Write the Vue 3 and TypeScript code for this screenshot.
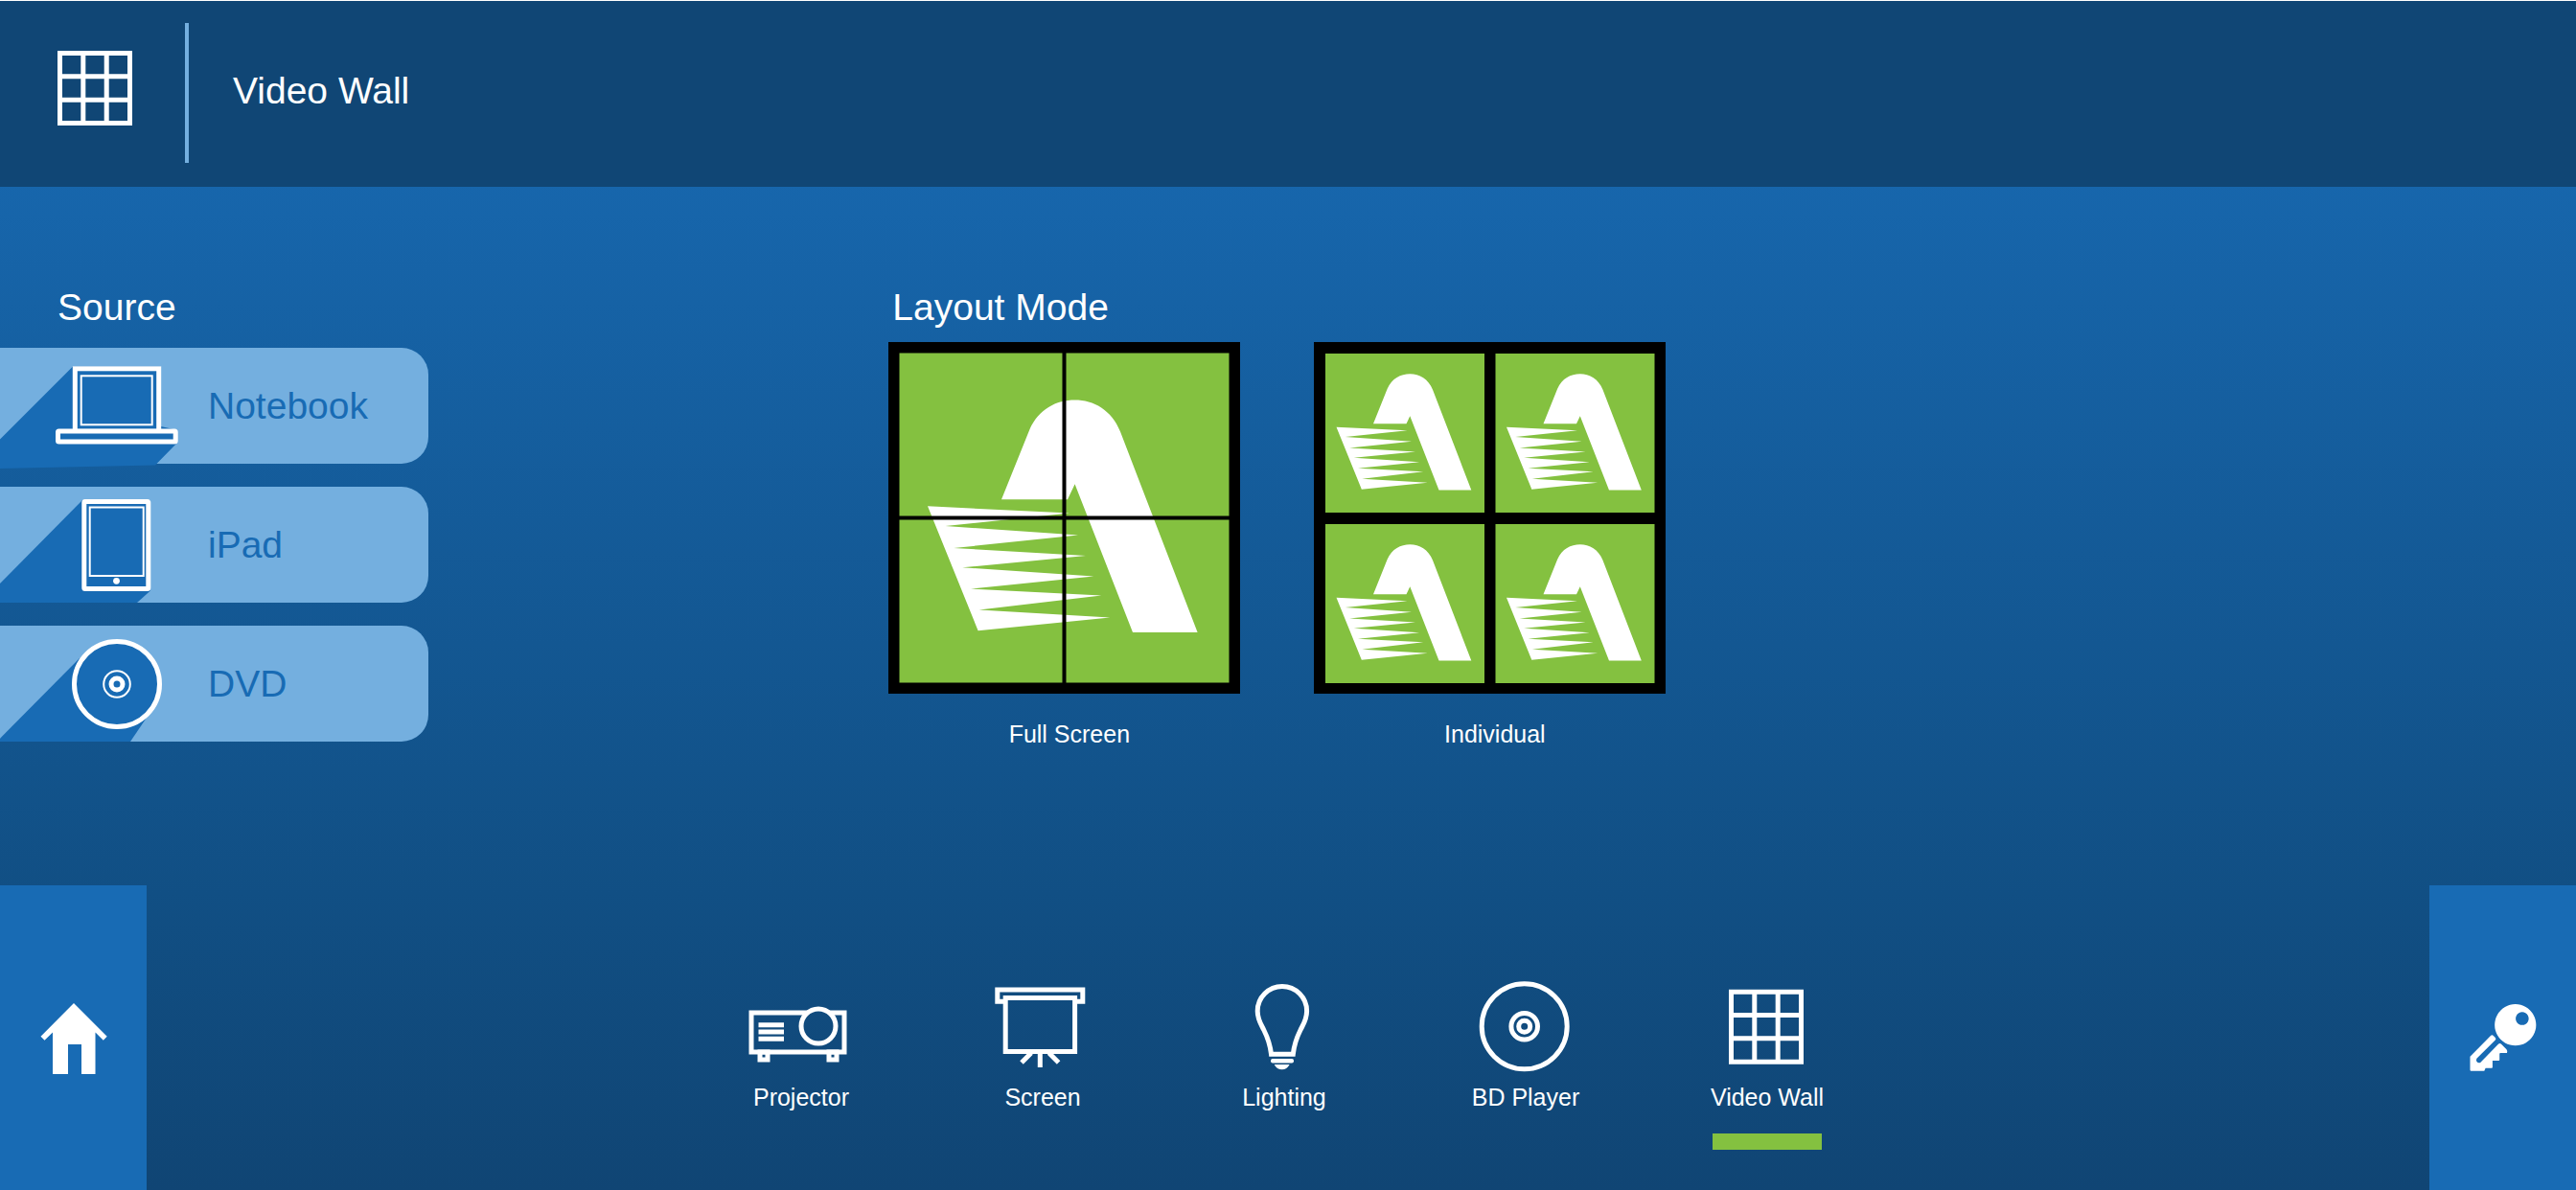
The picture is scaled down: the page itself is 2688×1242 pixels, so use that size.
<script setup lang="ts">
import { ref } from 'vue'

type Source = { id: string; label: string }
type Device = { id: string; label: string }

const sources: Source[] = [
  { id: 'notebook', label: 'Notebook' },
  { id: 'ipad', label: 'iPad' },
  { id: 'dvd', label: 'DVD' },
]

const devices: Device[] = [
  { id: 'projector', label: 'Projector' },
  { id: 'screen', label: 'Screen' },
  { id: 'lighting', label: 'Lighting' },
  { id: 'player', label: 'BD Player' },
  { id: 'wall', label: 'Video Wall' },
]

const activeDevice = ref('wall')

const arch =
  'M118 164.3 147.3 91.6C157 70 175 60.6 194.6 60.6S233 71 242 93.6L322.6 303H255L194.6 148.3 187 164.3Z'
const comb =
  'M41 171.3 189 178.6 59.6 192 198 201.6 68.3 215 206 223 77.3 235.3 214.3 244.6 86 257.6 222.3 264.6 94.6 279.6 231.3 287.6 93.6 301.3Z'

const cells = [
  { x: 12, y: 12 },
  { x: 189.5, y: 12 },
  { x: 12, y: 190 },
  { x: 189.5, y: 190 },
]
</script>

<template>
  <div class="page">
    <header class="header">
      <svg class="header-icon" viewBox="0 0 78 78" aria-hidden="true">
        <path class="line" d="M2.5 2.5H75.5V75.5H2.5ZM26.8 2.5V75.5M51.2 2.5V75.5M2.5 26.8H75.5M2.5 51.2H75.5" />
      </svg>
      <span class="divider"></span>
      <h1 class="title">Video Wall</h1>
    </header>

    <main class="main">
      <section class="sources">
        <h2 class="heading source-heading">Source</h2>
        <div class="source-list">
          <button v-for="s in sources" :key="s.id" type="button" class="source">
            <svg class="source-icon" viewBox="0 0 190 121" aria-hidden="true">
              <template v-if="s.id === 'notebook'">
                <path class="shade" d="M76 19.5 0 95.5V126L162 122.5 185 99V86L168 82V19.5Z" />
                <rect class="line" x="78.3" y="21.8" width="87.4" height="65.5" />
                <rect class="thin" x="84.7" y="29.3" width="74" height="51" />
                <rect class="line shade" x="60.5" y="87" width="122.7" height="11" rx="1" />
              </template>
              <template v-else-if="s.id === 'ipad'">
                <path class="shade" d="M86 14 0 101V121H143L157 108.5V14Z" />
                <rect class="line" x="87.8" y="15.5" width="67" height="91" rx="1" />
                <rect class="thin" x="93.7" y="21.5" width="56" height="71.5" />
                <circle class="solid" cx="121.5" cy="98.3" r="3.4" />
              </template>
              <template v-else>
                <path class="shade" d="M83 34 0 117.7V121H136L155 93Z" />
                <circle class="line shade" cx="122" cy="61" r="44.5" />
                <circle class="thin" cx="122" cy="61" r="13.8" />
                <circle class="line" cx="122" cy="61" r="6" />
              </template>
            </svg>
            <span class="source-label">{{ s.label }}</span>
          </button>
        </div>
      </section>

      <section class="modes">
        <h2 class="heading mode-heading">Layout Mode</h2>
        <div class="mode-list">
          <button type="button" class="mode">
            <svg class="mode-art" viewBox="0 0 367 367" aria-hidden="true">
              <rect width="367" height="367" />
              <rect class="green" x="11.5" y="11.5" width="344" height="344" />
              <path class="solid" :d="arch" />
              <path class="solid" :d="comb" />
              <path d="M181.5 11H185.5V356H181.5ZM11 181.5H356V185.5H11Z" />
            </svg>
            <span class="mode-label">Full Screen</span>
          </button>
          <button type="button" class="mode">
            <svg class="mode-art" viewBox="0 0 367 367" aria-hidden="true">
              <rect width="367" height="367" />
              <g v-for="(c, i) in cells" :key="i" :transform="`translate(${c.x} ${c.y})`">
                <rect class="green" width="166" height="166" />
                <g transform="translate(-9 -9) scale(0.5)">
                  <path class="solid" :d="arch" />
                  <path class="solid" :d="comb" />
                </g>
              </g>
            </svg>
            <span class="mode-label">Individual</span>
          </button>
        </div>
      </section>
    </main>

    <footer class="footer">
      <button type="button" class="corner" aria-label="Home">
        <svg class="corner-icon" viewBox="0 0 76 76" aria-hidden="true">
          <path class="solid" d="M38 2 72.7 36.7 68.8 40.8 60.5 32.5V76H46V45H32V76H16V32.5L7.5 40.8 3.5 36.7Z" />
        </svg>
      </button>

      <nav class="devices">
        <button
          v-for="d in devices"
          :key="d.id"
          type="button"
          class="device"
          :class="{ active: d.id === activeDevice }"
          @click="activeDevice = d.id"
        >
          <svg class="device-icon" viewBox="0 0 110 110" aria-hidden="true">
            <template v-if="d.id === 'projector'">
              <path class="line" d="M61.7 37H3V78H100V37H84.3M10.5 49.8H37M10.5 57H37M10.5 64.2H37" />
              <circle class="line" cx="73" cy="51" r="18" />
              <path class="line" d="M12 78H20V86H12ZM84 78H92V86H84Z" />
            </template>
            <template v-else-if="d.id === 'screen'">
              <path class="line" d="M16 25.2H7.8V13H96.8V25.2H89M16.2 21.5H88.6V77.5H16.2ZM52.3 78V94M43 79 33 89M61.6 79 71.6 89" />
            </template>
            <template v-else-if="d.id === 'lighting'">
              <path
                class="line"
                d="M27.2 35.2A25.7 25.7 0 0 1 78.6 35.2C78.6 44 75 49 72 55C67.5 64 65.3 71 64.3 80.3H41.5C40.5 71 38.3 64 33.8 55C30.8 49 27.2 44 27.2 35.2Z"
              />
              <rect class="solid" x="41" y="85" width="24" height="4.4" rx="2" />
              <path class="solid" d="M44.7 91H60.6C59 94.6 56 96.2 52.7 96.2S46.2 94.6 44.7 91Z" />
            </template>
            <template v-else-if="d.id === 'player'">
              <circle class="line" cx="53.7" cy="51.3" r="44.5" />
              <circle class="line" cx="53.7" cy="51.3" r="13.8" />
              <circle class="line" cx="53.7" cy="51.3" r="6" />
            </template>
            <template v-else>
              <path class="line" d="M17.5 15.2H90.5V88.2H17.5ZM41.8 15.2V88.2M66.2 15.2V88.2M17.5 39.4H90.5M17.5 63.8H90.5" />
            </template>
          </svg>
          <span class="device-label">{{ d.label }}</span>
          <span class="marker"></span>
        </button>
      </nav>

      <button type="button" class="corner" aria-label="Security">
        <svg class="corner-icon" viewBox="0 0 76 76" aria-hidden="true">
          <path
            class="solid"
            fill-rule="evenodd"
            d="M50.8 3.1A21.6 21.6 0 1 1 50.7 3.1ZM57.8 11.2A6.8 6.8 0 1 0 57.9 11.2Z"
          />
          <path
            class="solid"
            d="M3.5 71.5V57.7L25.2 35.8Q26.5 34.8 27.8 36L29.8 38Q31 39.3 29.8 40.5L10.4 59.8Q9.4 61.5 10.4 63Q12 65 14.2 64L33.2 44.6Q34.5 43.3 35.8 44.6L41.5 50.3Q42.8 52 42 54.1H35.2Q34.2 54.1 34.2 55V61.2Q34.2 62 33.3 62H26.9V69Q26.9 69.8 26 69.8H19.6L18.3 72.7H4.6Q3.5 72.7 3.5 71.5Z"
          />
        </svg>
      </button>
    </footer>
  </div>
</template>

<style>
body {
  margin: 0;
}
</style>

<style scoped>
.page {
  box-sizing: border-box;
  min-height: 100vh;
  display: flex;
  flex-direction: column;
  border-top: 1px solid #fff;
  color: #fff;
  font-family: "Liberation Sans", Arial, Helvetica, sans-serif;
  background: linear-gradient(#1766ac 15%, #114f84 75%, #104574 100%);
}

button {
  margin: 0;
  padding: 0;
  border: 0;
  background: none;
  color: inherit;
  font: inherit;
  cursor: pointer;
}

svg {
  display: block;
  flex: none;
}

.line {
  fill: none;
  stroke: #fff;
  stroke-width: 5px;
}

.thin {
  fill: none;
  stroke: #fff;
  stroke-width: 2px;
}

.solid {
  fill: #fff;
}

.shade {
  fill: #186bb4;
}

.green {
  fill: #84c140;
}

.header {
  display: flex;
  align-items: flex-start;
  box-sizing: border-box;
  height: 194px;
  padding: 23px 60px 24px;
  background: #104675;
}

.header-icon {
  width: 78px;
  height: 78px;
  margin-top: 29px;
}

.divider {
  width: 4px;
  height: 146px;
  margin-left: 55px;
  background: #74afdf;
}

.title,
.heading {
  margin: 0;
  font-size: 39px;
  line-height: 46px;
  font-weight: 400;
}

.title {
  margin: 48px 0 0 46px;
}

.main {
  flex: 1;
  display: grid;
  grid-template-columns: minmax(480px, 34.5%) 1fr;
  align-items: start;
  padding: 103px 0 40px;
}

.source-heading {
  padding-left: 60px;
  margin-bottom: 19px;
}

.source-list {
  display: flex;
  flex-direction: column;
  align-items: flex-start;
  gap: 24px;
}

.source {
  display: flex;
  align-items: center;
  width: 447px;
  height: 121px;
  border-radius: 0 28px 28px 0;
  background: #74afdf;
  color: #186bb4;
  text-align: left;
}

.source-icon {
  width: 190px;
  height: 121px;
  overflow: visible;
}

.source-label {
  padding-left: 27px;
  font-size: 39px;
  line-height: 46px;
}

.mode-heading {
  padding-left: 4px;
  margin-bottom: 13px;
}

.mode-list {
  display: flex;
  flex-wrap: wrap;
  gap: 40px 77px;
}

.mode {
  display: flex;
  flex-direction: column;
  gap: 27px;
}

.mode-art {
  width: 367px;
  height: 367px;
}

.mode-label,
.device-label {
  font-size: 25px;
  line-height: 30px;
}

.mode-label {
  box-sizing: border-box;
  width: 100%;
  padding-left: 10px;
  text-align: center;
}

.footer {
  display: flex;
  justify-content: space-between;
  align-items: flex-end;
}

.corner {
  flex: none;
  display: flex;
  align-items: center;
  justify-content: center;
  width: 153px;
  height: 318px;
  background: #186bb4;
}

.corner-icon {
  width: 76px;
  height: 76px;
}

.devices {
  display: flex;
  padding: 0 8px 42px 0;
}

.device {
  display: flex;
  flex-direction: column;
  align-items: center;
  width: 252px;
}

.device-icon {
  width: 110px;
  height: 110px;
}

.marker {
  width: 114px;
  height: 17px;
  margin-top: 23px;
}

.active .marker {
  background: #84c140;
}
</style>
